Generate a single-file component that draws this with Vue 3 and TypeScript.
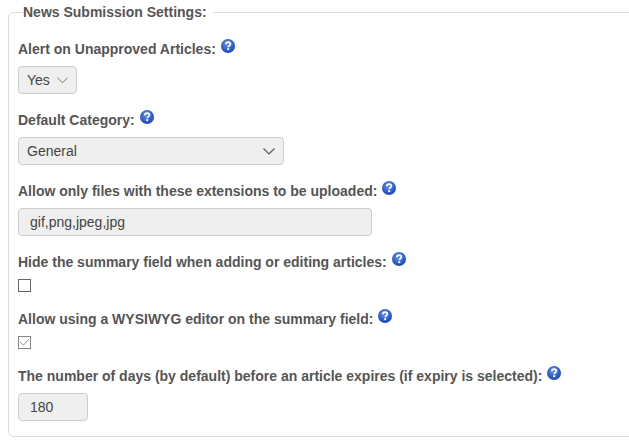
<script setup lang="ts">
interface Row { label: string; kind: string; value?: string; cls?: string }
const rows: Row[] = [
  { label: 'Alert on Unapproved Articles:', kind: 'select', value: 'Yes', cls: 'sel-short' },
  { label: 'Default Category:', kind: 'select', value: 'General', cls: 'sel-long' },
  { label: 'Allow only files with these extensions to be uploaded:', kind: 'text', value: 'gif,png,jpeg,jpg', cls: 'inp-long' },
  { label: 'Hide the summary field when adding or editing articles:', kind: 'check' },
  { label: 'Allow using a WYSIWYG editor on the summary field:', kind: 'checked' },
  { label: 'The number of days (by default) before an article expires (if expiry is selected):', kind: 'text', value: '180', cls: 'inp-short' },
]
</script>

<template>
  <div class="page">
    <fieldset class="box">
      <legend class="legend">News Submission Settings:</legend>
      <div v-for="r in rows" :key="r.label" class="row" :class="'row-' + r.kind">
        <div class="label">
          <span>{{ r.label }}</span>
          <svg class="help" viewBox="0 0 16 16" width="16" height="16">
            <defs>
              <radialGradient :id="'g' + r.label.length" cx="45%" cy="35%" r="70%">
                <stop offset="0" stop-color="#6f93ea" />
                <stop offset="0.6" stop-color="#2f5fd0" />
                <stop offset="1" stop-color="#1c3fa6" />
              </radialGradient>
            </defs>
            <circle cx="8" cy="8" r="7" :fill="'url(#g' + r.label.length + ')'" />
            <path d="M5.8 6.2 C5.9 4.7 7 4.2 8.1 4.2 C9.5 4.2 10.4 5 10.4 6.1 C10.4 7.6 8.4 7.7 8.3 9.2" fill="none" stroke="#fff" stroke-width="1.7" />
            <rect x="7.2" y="10.2" width="2" height="1.9" fill="#fff" />
          </svg>
        </div>
        <div v-if="r.kind === 'select'" class="control select" :class="r.cls">
          <span>{{ r.value }}</span>
          <svg class="chev" viewBox="0 0 12 7">
            <path d="M0.5 0.5 L6 6 L11.5 0.5" fill="none" />
          </svg>
        </div>
        <div v-else-if="r.kind === 'text'" class="control text" :class="r.cls">{{ r.value }}</div>
        <div v-else class="check">
          <svg v-if="r.kind === 'checked'" viewBox="0 0 11 11" width="11" height="11">
            <path d="M1 5 L4.3 8.3 L10 2" fill="none" stroke="#9a93a8" stroke-width="1" />
          </svg>
        </div>
      </div>
    </fieldset>
  </div>
</template>

<style>
html, body { margin: 0; background: #fff; overflow: hidden; }
</style>

<style scoped>
.page {
  width: 629px;
  height: 442px;
  padding: 4px 0 0 8px;
  box-sizing: border-box;
  overflow: hidden;
  font-family: "Liberation Sans", Arial, sans-serif;
}
.box {
  width: 640px;
  height: 433px;
  box-sizing: border-box;
  margin: 0;
  padding: 0 0 0 9px;
  border: 1px solid #ddd;
  border-radius: 6px;
}
.legend {
  margin-left: 5px;
  padding: 0 6px 0 0;
  font-size: 14px;
  font-weight: bold;
  line-height: 16px;
  color: #555;
}
.row { display: flex; flex-direction: column; align-items: flex-start; }
.label {
  display: flex;
  align-items: flex-start;
  height: 20px;
  font-size: 14px;
  font-weight: bold;
  line-height: 20px;
  color: #555;
}
.help { margin: -1px 0 0 4px; }
.control {
  box-sizing: border-box;
  height: 28px;
  margin-top: 7px;
  border: 1px solid #ccc;
  border-radius: 4px;
  background: #efefef;
  font-size: 14px;
  line-height: 26px;
  color: #444;
}
.select { display: flex; align-items: center; justify-content: space-between; padding: 0 8px; }
.chev { display: block; stroke: #666; stroke-width: 1; }
.sel-short { width: 59px; }
.sel-short .chev { width: 11px; height: 7px; }
.sel-long { width: 266px; }
.sel-long .chev { width: 12px; height: 7px; stroke: #555; stroke-width: 1.1; }
.text { padding-left: 11px; }
.inp-long { width: 354px; }
.inp-short { width: 70px; }
.check {
  box-sizing: border-box;
  width: 13px;
  height: 13px;
  margin-top: 7px;
  border: 1px solid #666;
  background: #fff;
  display: flex;
  align-items: center;
  justify-content: center;
}
.row-checked .check { border-color: #888; }
.row:nth-of-type(1) { margin-top: 19px; }
.row-select, .row-text { margin-bottom: 16px; }
.row-check, .row-checked { margin-bottom: 17px; }
</style>
